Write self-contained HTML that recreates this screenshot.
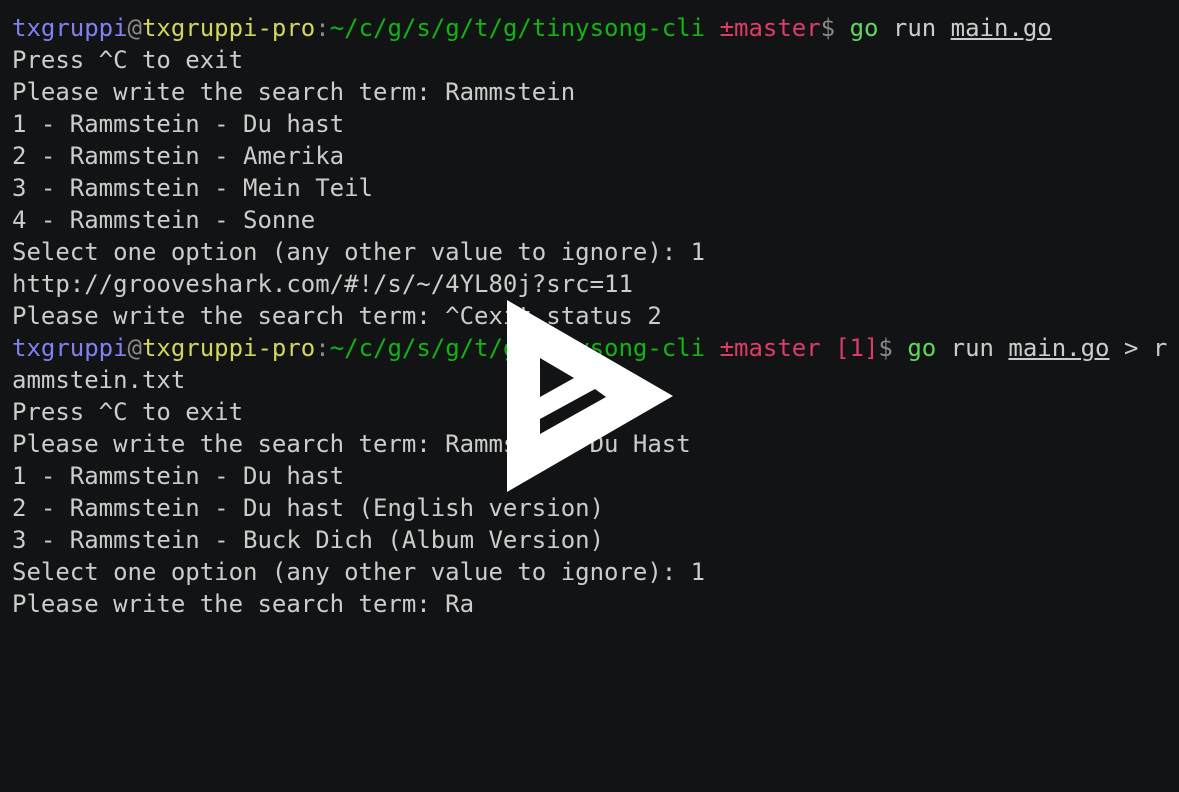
<!DOCTYPE html><html><head><style>
body{margin:0;background:#121314;width:1179px;height:792px;overflow:hidden}
pre{margin:0;position:absolute;left:12px;top:12px;font-family:"DejaVu Sans Mono","Liberation Mono",monospace;font-size:24px;line-height:32px;color:#cccccc;letter-spacing:-0.01px}
.p{color:#8181f0}.y{color:#d5d55c}.g{color:#13b313}.m{color:#dd3c69}.k{color:#5fd75f}.gr{color:#8a8a8a}u{text-decoration:underline}
svg{position:absolute;left:0;top:0}
</style></head><body>
<pre><span class="p">txgruppi</span><span class="gr">@</span><span class="y">txgruppi-pro</span><span class="gr">:</span><span class="g">~/c/g/s/g/t/g/tinysong-cli</span> <span class="m">±master</span><span class="gr">$</span> <span class="k">go</span> run <u>main.go</u>
Press ^C to exit
Please write the search term: Rammstein
1 - Rammstein - Du hast
2 - Rammstein - Amerika
3 - Rammstein - Mein Teil
4 - Rammstein - Sonne
Select one option (any other value to ignore): 1
http://grooveshark.com/#!/s/~/4YL80j?src=11
Please write the search term: ^Cexit status 2
<span class="p">txgruppi</span><span class="gr">@</span><span class="y">txgruppi-pro</span><span class="gr">:</span><span class="g">~/c/g/s/g/t/g/tinysong-cli</span> <span class="m">±master [1]</span><span class="gr">$</span> <span class="k">go</span> run <u>main.go</u> &gt; r
ammstein.txt
Press ^C to exit
Please write the search term: Rammstein Du Hast
1 - Rammstein - Du hast
2 - Rammstein - Du hast (English version)
3 - Rammstein - Buck Dich (Album Version)
Select one option (any other value to ignore): 1
Please write the search term: Ra</pre>
<svg width="1179" height="792"><path fill="#fff" d="M507 300L673 396L507 492Z"/><path fill="#121314" d="M540 358L574 378L540 397Z M595 389L606 397L540 434L540 419Z"/></svg>
</body></html>
